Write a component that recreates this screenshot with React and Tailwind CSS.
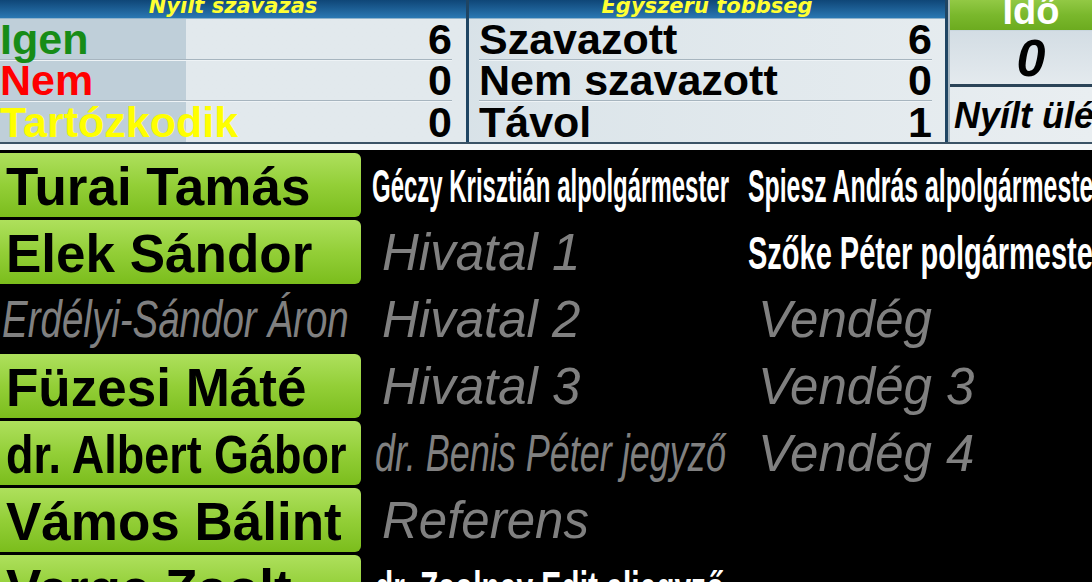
const boldWhite = 'font-bold text-white text-[47px]';
const grayItalic = 'italic text-[#808080] text-[51px]';

const rows = [
  {
    name: { text: 'Turai Tamás', green: true },
    mid: { text: 'Géczy Krisztián alpolgármester', cls: `${boldWhite} scale-x-[0.51]`, pad: 'pl-[11px]' },
    right: { text: 'Spiesz András alpolgármester', cls: `${boldWhite} scale-x-[0.528]`, pad: 'pl-[2px]' },
  },
  {
    name: { text: 'Elek Sándor', green: true },
    mid: { text: 'Hivatal 1', cls: grayItalic, pad: 'pl-[21px]' },
    right: { text: 'Szőke Péter polgármester', cls: `${boldWhite} scale-x-[0.617]`, pad: 'pl-[2px]' },
  },
  {
    name: { text: 'Erdélyi-Sándor Áron', green: false },
    mid: { text: 'Hivatal 2', cls: grayItalic, pad: 'pl-[21px]' },
    right: { text: 'Vendég', cls: grayItalic, pad: 'pl-[12px]' },
  },
  {
    name: { text: 'Füzesi Máté', green: true },
    mid: { text: 'Hivatal 3', cls: grayItalic, pad: 'pl-[21px]' },
    right: { text: 'Vendég 3', cls: grayItalic, pad: 'pl-[12px]' },
  },
  {
    name: { text: 'dr. Albert Gábor', green: true, cls: 'scale-x-[0.848]' },
    mid: { text: 'dr. Benis Péter jegyző', cls: `${grayItalic} scale-x-[0.706]`, pad: 'pl-[14px]' },
    right: { text: 'Vendég 4', cls: grayItalic, pad: 'pl-[12px]' },
  },
  {
    name: { text: 'Vámos Bálint', green: true },
    mid: { text: 'Referens', cls: grayItalic, pad: 'pl-[21px]' },
    right: null,
  },
  {
    name: { text: 'Varga Zsolt', green: true },
    mid: { text: 'dr. Zsolnay Edit aljegyző', cls: `${boldWhite} scale-x-[0.637]`, pad: 'pl-[14px]' },
    right: null,
  },
];

function Cell({ item, className = '' }) {
  return (
    <div className={`flex h-full items-center overflow-hidden ${className} ${item ? item.pad : ''}`}>
      {item && (
        <span className={`inline-block origin-left whitespace-nowrap leading-none ${item.cls}`}>
          {item.text}
        </span>
      )}
    </div>
  );
}

function NameCell({ name }) {
  if (!name.green) {
    return (
      <div className="flex h-full w-[361px] shrink-0 items-center overflow-hidden pl-[2px]">
        <span className="inline-block origin-left whitespace-nowrap text-[51px] italic leading-none text-[#808080] scale-x-[0.755]">
          {name.text}
        </span>
      </div>
    );
  }
  return (
    <div className="flex h-full w-[361px] shrink-0 items-center overflow-hidden rounded-r-[6px] bg-gradient-to-b from-[#aee05c] via-[#93cf37] to-[#7bbd1b] pl-[6px] pt-[3px]">
      <span className={`inline-block origin-left whitespace-nowrap text-[53px] font-bold leading-none text-black ${name.cls || ''}`}>
        {name.text}
      </span>
    </div>
  );
}

function StatRow({ label, value, labelColor, last }) {
  return (
    <div
      className={`flex h-[41px] items-center justify-between ${
        last ? '' : 'border-b border-b-[#a7b5bf] shadow-[0_1px_0_#eef3f6]'
      }`}
    >
      <span className={`whitespace-nowrap text-[43px] font-bold leading-[38px] ${labelColor}`}>{label}</span>
      <span className="text-[43px] font-bold leading-[38px] text-black">{value}</span>
    </div>
  );
}

function BlueHeader({ title }) {
  return (
    <div className="h-[20px] overflow-hidden border-b border-b-[#8fb3cc] bg-gradient-to-b from-[#0f4677] to-[#2a78b3] text-center">
      <div className="-mt-[5px] font-['DejaVu_Sans',sans-serif] text-[21px] font-bold italic leading-[22px] text-[#ffff33]">
        {title}
      </div>
    </div>
  );
}

export default function App() {
  return (
    <div className="h-[582px] w-[1092px] overflow-hidden bg-black font-['Liberation_Sans',Arial,sans-serif]">
      {/* top scoreboard */}
      <div className="h-[150px] bg-[#f2f5f7] pb-[6px]">
        <div className="flex h-[144px] border-b-2 border-b-[#3b5366] bg-gradient-to-r from-[#c2d1db] via-[#dce5ea] to-[#e9eef1]">
          <div className="flex w-[466px] shrink-0 flex-col bg-gradient-to-r from-[#bfcfd9] from-40% to-[#e2e9ed] to-40%">
            <BlueHeader title="Nyílt szavazás" />
            <div className="flex flex-col pr-[14px]">
              <StatRow label="Igen" value="6" labelColor="text-[#178c17]" />
              <StatRow label="Nem" value="0" labelColor="text-[#ff0000]" />
              <StatRow label="Tartózkodik" value="0" labelColor="text-[#ffff00]" last />
            </div>
          </div>
          <div className="w-[3px] shrink-0 bg-[#1f4563]" />
          <div className="flex w-[476px] shrink-0 flex-col">
            <BlueHeader title="Egyszerű többség" />
            <div className="flex flex-col pl-[10px] pr-[13px]">
              <StatRow label="Szavazott" value="6" labelColor="text-black" />
              <StatRow label="Nem szavazott" value="0" labelColor="text-black" />
              <StatRow label="Távol" value="1" labelColor="text-black" last />
            </div>
          </div>
          <div className="w-[3px] shrink-0 bg-[#1f4563]" />
          <div className="w-[2px] shrink-0 bg-[#a9b8c2]" />
          <div className="flex w-[162px] shrink-0 flex-col">
            <div className="h-[31px] overflow-hidden border-b border-b-[#c9d6de] bg-gradient-to-b from-[#92c944] via-[#7ab82c] to-[#6cab1f] text-center">
              <div className="-mt-[8px] text-[38px] font-bold leading-[38px] text-white">Idő</div>
            </div>
            <div className="flex h-[56px] items-center justify-center border-b-[3px] border-b-[#2b4458] bg-gradient-to-b from-[#d3dde4] to-[#e4eaee]">
              <span className="text-[52px] font-bold italic leading-none text-black">0</span>
            </div>
            <div className="flex flex-1 items-center overflow-hidden pl-[4px] pt-[3px]">
              <span className="whitespace-nowrap text-[36px] font-bold italic leading-none text-black">Nyílt ülés</span>
            </div>
          </div>
        </div>
      </div>

      {/* seat list */}
      <div className="flex flex-col gap-[3px] pt-[3px]">
        {rows.map((row, i) => (
          <div key={i} className="flex h-[64px] shrink-0">
            <NameCell name={row.name} />
            <Cell item={row.mid} className="w-[385px] shrink-0" />
            <Cell item={row.right} className="flex-1" />
          </div>
        ))}
      </div>
    </div>
  );
}
